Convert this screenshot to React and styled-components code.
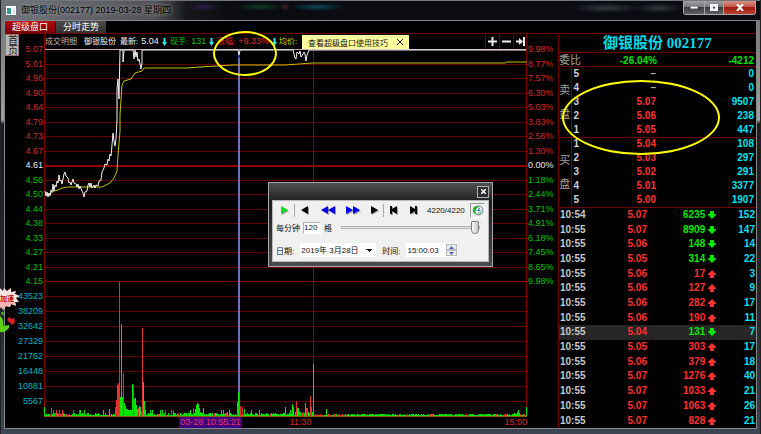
import React, { useState } from 'react';
import styled, { createGlobalStyle } from 'styled-components';

const PRICES = ['5.07', '5.01', '4.96', '4.90', '4.84', '4.79', '4.73', '4.67', '4.61', '4.56', '4.50', '4.44', '4.38', '4.33', '4.27', '4.21', '4.15'];
const PERCENTS = ['9.98%', '8.77%', '7.57%', '6.30%', '5.03%', '3.83%', '2.56%', '1.30%', '0.00%', '1.18%', '2.44%', '3.71%', '4.91%', '6.18%', '7.45%', '8.65%', '9.98%'];
const VOLUMES = ['43523', '38209', '32642', '27329', '21762', '16448', '10881', '5567'];

const SELL = [
  ['5', '–', '0'],
  ['4', '–', '0'],
  ['3', '5.07', '9507'],
  ['2', '5.06', '238'],
  ['1', '5.05', '447'],
];
const BUY = [
  ['1', '5.04', '108'],
  ['2', '5.03', '297'],
  ['3', '5.02', '291'],
  ['4', '5.01', '3377'],
  ['5', '5.00', '1907'],
];

const TRADES = [
  ['10:54', '5.07', 6235, 'down', 152],
  ['10:55', '5.07', 8909, 'down', 147],
  ['10:55', '5.06', 148, 'down', 14],
  ['10:55', '5.05', 314, 'down', 22],
  ['10:55', '5.06', 17, 'up', 3],
  ['10:55', '5.06', 127, 'up', 9],
  ['10:55', '5.06', 282, 'up', 17],
  ['10:55', '5.06', 190, 'up', 11],
  ['10:55', '5.04', 131, 'down', 7],
  ['10:55', '5.05', 303, 'up', 17],
  ['10:55', '5.06', 379, 'up', 18],
  ['10:55', '5.07', 1276, 'up', 40],
  ['10:55', '5.07', 1033, 'up', 21],
  ['10:55', '5.07', 1063, 'up', 26],
  ['10:55', '5.07', 828, 'up', 21],
];

const PRICE_LINE =
  '1,142 2,147 3,143 4,148 5,144 6,147 7,141 8,143 9,135 10,142 11,136 12,138 13,132 14,134 15,126 16,132 17,131 18,135 19,130 20,125 21,123 22,127 24,129 25,134 26,133 27,136 29,130 30,134 32,135 33,138 34,135 35,140 36,137 38,142 39,144 40,148 41,143 43,142 44,136 45,134 46,138 47,134 48,139 50,136 51,139 52,136 54,137 55,132 57,131 58,123 60,119 61,115 63,116 64,110 65,112 66,105 67,107 68,96 69,84 70,92 71,97 72,90 73,71 73,40 74,30 75,50 76,1 79,1 79,13 80,1 89,1 90,10 91,1 92,8 93,3 94,12 95,10 97,20 98,14 98,1 194,1 195,6 196,1 249,1 251,9 252,10 253,3 255,5 256,2 257,8 259,5 260,3 261,5 262,12 263,6 265,1 482,1';
const AVERAGE_LINE =
  '1,145 6,145 10,142 14,141 18,139 24,138 40,138 58,138 62,136 66,134 70,129 73,122 74,106 76,82 76,66 77,51 78,36 80,32 87,30 91,24 98,22 100,19 143,19 156,18 189,16 241,16 255,15 269,14 461,14 463,13 483,13';

// [x, y of the top, colour]
const PEAKS = [
  [0, 358, 'g'], [7, 359, 'r'], [11, 364, 'r'], [18, 361, 'r'],
  [59, 361, 'g'], [65, 360, 'g'],
  [71, 358, 'r'], [72, 351, 'r'], [73, 336, 'r'], [74, 334, 'r'], [75, 233, 'r'],
  [76, 348, 'g'], [77, 275, 'g'], [78, 348, 'g'], [79, 324, 'm'], [80, 354, 'g'], [81, 357, 'g'], [82, 360, 'g'],
  [83, 360, 'g'], [84, 361, 'g'], [86, 361, 'g'], [88, 335, 'g'], [89, 336, 'm'], [90, 350, 'g'], [91, 349, 'g'],
  [92, 356, 'g'], [94, 359, 'r'], [96, 358, 'g'], [98, 279, 'r'], [99, 333, 'g'], [100, 352, 'g'], [101, 361, 'g'],
  [106, 361, 'g'], [129, 362, 'g'], [151, 360, 'g'], [152, 356, 'g'], [153, 354, 'g'], [154, 355, 'g'], [155, 362, 'g'],
  [183, 363, 'g'], [193, 353, 'g'], [194, 342, 'g'], [195, 344, 'g'], [196, 357, 'r'], [198, 358, 'r'], [200, 360, 'g'],
  [241, 358, 'g'], [248, 355, 'g'], [249, 358, 'g'], [252, 352, 'r'], [254, 360, 'g'], [261, 354, 'g'],
  [262, 360, 'r'], [266, 347, 'r'], [267, 358, 'r'], [269, 315, 'g'], [282, 360, 'g'],
  [470, 364, 'g'], [473, 363, 'g'], [474, 361, 'g'], [475, 364, 'g'], [482, 358, 'g'],
];

const FILL = { r: '#e83030', g: '#00e800', m: '#7a6a10' };

const wobble = (i) => {
  const v = Math.sin(i * 12.9898) * 43758.5453;
  return v - Math.floor(v);
};

const BARS = Array.from({ length: 483 }, (_, x) => {
  const n = wobble(x + 1);
  const busy = x < 270 ? 3 : 2;
  let h = 1 + Math.floor(n * busy);
  if (n > 0.9 && x < 270) h += 3;
  if (x > 78 && x < 102) h += 4;
  if (x > 148 && x < 160) h += 2;
  if (x > 250 && x < 270) h += 2;
  const redChance = x < 30 || (x > 250 && x < 300) ? 0.6 : 0.15;
  return { x, h, color: wobble(x + 700) < redChance ? FILL.r : FILL.g };
});

const StockChart = () => (
  <ChartSvg viewBox='0 0 483 368' preserveAspectRatio='none' role='img' aria-label='分时走势'>
    <g shapeRendering='crispEdges'>
      {PRICES.map((p, i) => (
        <rect
          key={p}
          x='0'
          y={Math.round(i * 14.5)}
          width='483'
          height={i === 8 ? 2 : 1}
          fill={i === 0 ? '#c8a8a8' : i === 8 || i === 16 ? '#900000' : '#680000'}
        />
      ))}
      {VOLUMES.map((v, i) => (
        <rect key={v} x='0' y={247 + i * 15} width='483' height='1' fill='#680000' />
      ))}
      <rect x='0' y='0' width='1' height='368' fill='#800000' />
      <rect x='482' y='0' width='1' height='368' fill='#800000' />
      <rect x='269' y='0' width='1' height='368' fill='#980000' />
      {BARS.map((b) => (
        <rect key={b.x} x={b.x} y={367 - b.h} width='1' height={b.h} fill={b.color} />
      ))}
      {PEAKS.map(([x, y, c]) => (
        <rect key={x} x={x} y={y} width='1' height={367 - y} fill={FILL[c]} />
      ))}
      <rect x='0' y='367' width='483' height='1' fill='#8a5a00' />
      <rect x='194' y='5' width='2' height='338' fill='#7070b4' />
      <rect x='195' y='343' width='1' height='25' fill='#7070b4' />
      <rect x='194' y='5' width='2' height='4' fill='#2030a0' />
    </g>
    <polyline points={AVERAGE_LINE} fill='none' stroke='#c8c000' strokeWidth='1' />
    <polyline points={PRICE_LINE} fill='none' stroke='#f0f0f0' strokeWidth='1' />
  </ChartSvg>
);

const BlockArrow = ({ dir }) => (
  <svg width='8' height='8' viewBox='0 0 8 8' aria-hidden='true'>
    <path
      d={dir === 'down' ? 'M2 0h4v3h2v1L4 8 0 4V3h2z' : 'M2 8h4V5h2V4L4 0 0 4v1h2z'}
      fill='currentColor'
    />
  </svg>
);

const ThinArrow = () => (
  <svg width='5' height='8' viewBox='0 0 5 8' aria-hidden='true'>
    <path d='M1.500 0h2v4H5L2.500 8 0 4h1.500z' fill='#30e8f0' />
  </svg>
);

const PlayIcon = ({ kind }) => {
  const shapes = {
    play: ['M2 1l7 4-7 4z', '#00e020', 10],
    prev: ['M8 1v8L1 5z', '#000', 10],
    rewind: ['M8 1v8L1 5zM15 1v8L8 5z', '#0000f0', 16],
    forward: ['M1 1v8l7-4zM8 1v8l7-4z', '#0000f0', 16],
    next: ['M2 1v8l7-4z', '#000', 10],
    first: ['M1 1h2v3l5-3v8L3 6v3H1z', '#000', 10],
    last: ['M9 1H7v3L2 1v8l5-3v3h2z', '#000', 10],
  };
  const [d, fill, w] = shapes[kind];
  return (
    <svg width={w} height='11' viewBox={`0 0 ${w} 11`} aria-hidden='true'>
      <path d={d} fill='#9a9a9a' transform='translate(1 1)' />
      <path d={d} fill={fill} />
    </svg>
  );
};

const BookSide = ({ name, rows }) => (
  <tbody>
    {rows.map(([level, price, volume], i) => (
      <tr key={level}>
        {i === 0 && (
          <SideHead rowSpan={5} scope='rowgroup'>
            {name[0]}
            <br />
            {name[1]}
          </SideHead>
        )}
        <LevelCell>{level}</LevelCell>
        <PriceCell $muted={price === '–'}>{price}</PriceCell>
        <VolumeCell>{volume}</VolumeCell>
      </tr>
    ))}
  </tbody>
);

const ReplayDialog = () => {
  const [speed, setSpeed] = useState('120');
  const [progress, setProgress] = useState(100);
  const [time, setTime] = useState('15:00:03');

  return (
    <Dialog role='dialog' aria-label='回放'>
      <DialogTitle>
        <DialogClose aria-label='关闭'>
          <svg width='5' height='5' viewBox='0 0 5 5'>
            <path d='M0 0l5 5M5 0L0 5' stroke='#fff' strokeWidth='1.500' />
          </svg>
        </DialogClose>
      </DialogTitle>
      <DialogBody>
        <PlayRow>
          <PlayButton $w={20} aria-label='播放'><PlayIcon kind='play' /></PlayButton>
          <Separator />
          <PlayButton $w={20} aria-label='上一笔'><PlayIcon kind='prev' /></PlayButton>
          <PlayButton $w={25} aria-label='快退'><PlayIcon kind='rewind' /></PlayButton>
          <PlayButton $w={25} aria-label='快进'><PlayIcon kind='forward' /></PlayButton>
          <PlayButton $w={18} aria-label='下一笔'><PlayIcon kind='next' /></PlayButton>
          <Separator />
          <PlayButton $w={20} aria-label='最前'><PlayIcon kind='first' /></PlayButton>
          <PlayButton $w={18} aria-label='最后'><PlayIcon kind='last' /></PlayButton>
          <Counter>4220/4220</Counter>
          <ClockButton aria-label='时间'>
            <svg width='12' height='11' viewBox='0 0 12 11'>
              <circle cx='6.500' cy='5.500' r='4.500' fill='#e4f0fa' stroke='#6a8098' />
              <path d='M5.500 5.500L8 3M5.500 5.500h3' stroke='#3070b0' fill='none' />
              <path d='M7 1.500C3 0 0 3 1 7l3 3-.5-4C4 4 5 3 7 1.500z' fill='#28b428' />
              <path d='M5 9.500l2-2 1 1 2-2' stroke='#28b428' fill='none' />
            </svg>
          </ClockButton>
        </PlayRow>
        <SpeedRow>
          <label htmlFor='speed'>每分钟</label>
          <SpeedInput id='speed' value={speed} onChange={(e) => setSpeed(e.target.value)} />
          <span>格</span>
          <Slider
            type='range'
            aria-label='进度'
            value={progress}
            onChange={(e) => setProgress(Number(e.target.value))}
          />
        </SpeedRow>
        <DateRow>
          <label htmlFor='date'>日期:</label>
          <DateSelect id='date'>
            <option>2019年 3月28日</option>
          </DateSelect>
          <label htmlFor='time'>时间:</label>
          <TimeBox>
            <TimeInput id='time' value={time} onChange={(e) => setTime(e.target.value)} />
            <Spinner>
              <SpinButton aria-label='增加'>
                <svg width='5' height='3' viewBox='0 0 5 3'><path d='M0 3l2.500-3L5 3z' fill='#4868b8' /></svg>
              </SpinButton>
              <SpinButton aria-label='减少'>
                <svg width='5' height='3' viewBox='0 0 5 3'><path d='M0 0l2.500 3L5 0z' fill='#4868b8' /></svg>
              </SpinButton>
            </Spinner>
          </TimeBox>
        </DateRow>
      </DialogBody>
    </Dialog>
  );
};

const App = () => {
  const [tipOpen, setTipOpen] = useState(true);

  return (
    <>
      <GlobalStyle />
      <Window>
        <TitleBar>
          <AppIcon width='10' height='9' viewBox='0 0 10 9' aria-hidden='true'>
            <rect width='10' height='9' fill='#f4f8f8' />
            <rect x='1' y='2' width='4' height='6' fill='#3a9a98' />
            <rect x='7' y='3' width='2' height='5' fill='#d8dce0' />
          </AppIcon>
          <Title>御银股份(002177) 2019-03-28 星期四</Title>
          <WindowButtons>
            <WindowButton $w={20} aria-label='最小化'>
              <svg width='8' height='3'><rect width='8' height='3' fill='#fff' stroke='#555' /></svg>
            </WindowButton>
            <WindowButton $w={19} aria-label='最大化'>
              <svg width='8' height='7' viewBox='0 0 8 7'>
                <path d='M0 0h8v7H0zM3 2.500v2h2v-2z' fill='#f4f4f4' fillRule='evenodd' />
              </svg>
            </WindowButton>
            <WindowButton $w={32} $close aria-label='关闭'>
              <svg width='8' height='7' viewBox='0 0 8 7'>
                <path d='M1 0l6 7M7 0L1 7' stroke='#fff' strokeWidth='2' />
              </svg>
            </WindowButton>
          </WindowButtons>
        </TitleBar>

        <Content>
          <Tabs>
            <Tab $active>超级盘口</Tab>
            <Tab>分时走势</Tab>
          </Tabs>
          <Main>
            <div>
              <HomeButton>首页</HomeButton>
            </div>
            <Axis $align='right'>
              <PriceScale>
                {PRICES.map((p, i) => <Tick key={p} $row={i}>{p}</Tick>)}
              </PriceScale>
              {VOLUMES.map((v) => <VolumeTick key={v}>{v}</VolumeTick>)}
            </Axis>

            <ChartArea>
              <ChartHeader>
                <Field $w={39}>成交明细</Field>
                <Field $w={36} $color='#f0f0f0'>御银股份</Field>
                <Field $w={50} $color='#f0f0f0'>最新:<b>5.04</b><ThinArrow /></Field>
                <Field $w={47} $color='#00c800'>现手:<b>131</b><ThinArrow /></Field>
                <Field $w={62} $color='#e02828'>涨幅:<b>+9.33%</b><ThinArrow /></Field>
                <Field $w={22} $color='#d8d000'>均价:</Field>
                <ToolButtons>
                  <ToolButton aria-label='放大'>
                    <svg width='9' height='9' viewBox='0 0 9 9'><path d='M3.500 0h2v3.500H9v2H5.500V9h-2V5.500H0v-2h3.500z' fill='#eee' /></svg>
                  </ToolButton>
                  <ToolButton aria-label='缩小'>
                    <svg width='9' height='9' viewBox='0 0 9 9'><path d='M0 3.500h9v2H0z' fill='#eee' /></svg>
                  </ToolButton>
                  <ToolButton aria-label='移到末尾'>
                    <svg width='9' height='9' viewBox='0 0 9 9'><path d='M0 3.500h3V1l4 3.500L3 8V5.500H0zM7 0h2v9H7z' fill='#eee' /></svg>
                  </ToolButton>
                </ToolButtons>
                {tipOpen && (
                  <Tip>
                    <a href='#tips'>查看超级盘口使用技巧</a>
                    <TipClose aria-label='关闭提示' onClick={() => setTipOpen(false)}>
                      <svg width='6' height='6' viewBox='0 0 6 6'><path d='M0 0l6 6M6 0L0 6' stroke='#222' /></svg>
                    </TipClose>
                  </Tip>
                )}
              </ChartHeader>
              <StockChart />
              <TimeAxis>
                <CursorTime>03-28 10:55:21</CursorTime>
                <NoonTime>11:30</NoonTime>
                <span>15:00</span>
              </TimeAxis>
              <ChartMark />
            </ChartArea>

            <Axis>
              <PriceScale>
                {PERCENTS.map((p, i) => <Tick key={i} $row={i}>{p}</Tick>)}
              </PriceScale>
            </Axis>

            <Quotes>
              <QuoteTitle>御银股份 002177</QuoteTitle>
              <Ratio>
                <RatioName>委比</RatioName>
                <span>-26.04%</span>
                <span>-4212</span>
              </Ratio>
              <BookTable>
                <BookSide name='卖盘' rows={SELL} />
                <BookSide name='买盘' rows={BUY} />
              </BookTable>
              <TradeTable>
                <tbody>
                  {TRADES.map(([at, price, volume, dir, count], i) => (
                    <TradeRow key={i} $selected={i === 8}>
                      <TimeCell>{at}</TimeCell>
                      <TradePrice>{price}</TradePrice>
                      <TradeVolume $dir={dir}>{volume} <BlockArrow dir={dir} /></TradeVolume>
                      <CountCell>{count}</CountCell>
                    </TradeRow>
                  ))}
                </tbody>
              </TradeTable>
              <BookMark />
            </Quotes>

            <ReplayDialog />
          </Main>
        </Content>

        <Sticker href='#boost'>
          <svg width='20' height='50' viewBox='0 0 20 50' aria-hidden='true'>
            <path d='M0 1l3 3 1-3 3 3 4-3v4l5-1-1 3 5 2-4 2 3 4-4 0 1 4-5-2-1 3-4-1-3 4-1-3-2 1z' fill='#fce4e4' />
            <path d='M0 15h15l1 3-5-1-1 3-4-1-3 4-1-3-2 1z' fill='#f4b4b4' />
            <path d='M9 30l3 2 2-1 1 4-3 3-5-5z' fill='#e02020' />
            <path d='M1 25h3v3H1z' fill='#30a010' />
            <path d='M0 29q4 3 3 10l6-1v3q-4 5-9 4z' fill='#60d018' />
          </svg>
          <StickerText>加速</StickerText>
        </Sticker>
      </Window>
    </>
  );
};

export default App;

const GlobalStyle = createGlobalStyle`
  * {
    box-sizing: border-box;
  }

  body {
    margin: 0;
    background: #000;
    font-family: 'Liberation Sans', 'Noto Sans CJK SC', sans-serif;
    font-size: 9px;
    color: #ddd;
  }

  button,
  input,
  select {
    margin: 0;
    padding: 0;
    border: none;
    border-radius: 0;
    font: inherit;
    color: inherit;
  }

  button {
    display: flex;
    align-items: center;
    justify-content: center;
    background: none;
  }

  svg {
    display: block;
    flex: none;
  }
`;

const Window = styled.div`
  position: relative;
  display: flex;
  flex-direction: column;
  min-height: 100vh;
  padding: 0 3px 5px;
  background: linear-gradient(to bottom, #6e6e72, #a0a0a2 120px, #1c1c20 124px, #26262c 70%, #3c4654);
  border-left: 1px solid #222;
  border-right: 1px solid #222;
`;

const TitleBar = styled.header`
  display: flex;
  align-items: flex-start;
  height: 20px;
  margin: 0 -3px;
  padding: 0 4px 0 5px;
  border-top: 1px solid #70747c;
  background:
    radial-gradient(ellipse 16px 4px at 203px 6px, #2c1c4c, transparent),
    radial-gradient(ellipse 24px 4px at 259px 6px, #0c3c24, transparent),
    radial-gradient(ellipse 28px 4px at 316px 6px, #0c4454, transparent),
    radial-gradient(ellipse 5px 4px at 284px 6px, #4c1820, transparent),
    radial-gradient(ellipse 36px 5px at 606px 7px, #32363e, transparent),
    radial-gradient(ellipse 24px 5px at 658px 7px, #32363e, transparent),
    linear-gradient(to right, #70747a, #606266 90px, #505256 155px, #18181c 185px, #0a0c10 230px, #0a0c12);
`;

const AppIcon = styled.svg`
  margin-top: 5px;
`;

const Title = styled.h1`
  margin: 1px 0 0 5px;
  font-size: 9px;
  font-weight: normal;
  line-height: 16px;
  color: #000;
  text-shadow: 0 0 4px #bbb;
`;

const WindowButtons = styled.div`
  display: flex;
  margin-left: auto;
  border: 1px solid #a8a8ac;
  border-top: none;
  border-radius: 0 0 3px 3px;
  overflow: hidden;
`;

const WindowButton = styled.button`
  width: ${({ $w }) => $w}px;
  height: 13px;
  background: ${({ $close }) =>
    $close
      ? 'linear-gradient(#d89084, #c05848 45%, #a01c10 50%, #b84030)'
      : 'linear-gradient(#a0a0a4, #78787c 45%, #3c3c40 50%, #606064)'};

  & + & {
    border-left: 1px solid #a8a8ac;
  }
`;

const Content = styled.div`
  flex: 1;
  display: flex;
  flex-direction: column;
  border: 1px solid #84888c;
  background: #000;
`;

const Tabs = styled.nav`
  display: flex;
  gap: 1px;
  height: 13px;
  border-bottom: 1px solid #700000;
`;

const Tab = styled.button`
  width: 50px;
  height: 12px;
  line-height: 12px;
  color: #fff;
  background: ${({ $active }) => ($active ? 'linear-gradient(#b80c10, #780004)' : 'linear-gradient(#4c4c4c, #303030)')};
`;

const Main = styled.main`
  position: relative;
  flex: 1;
  display: grid;
  grid-template-columns: 14px 25px minmax(0, 1fr) 31px 198px;
`;

const HomeButton = styled.button`
  width: 14px;
  height: 22px;
  align-items: center;
  justify-content: flex-end;
  overflow: hidden;
  writing-mode: vertical-rl;
  font-size: 10px;
  color: #222;
  background: #b8b8b8;
  border: 1px solid #a07070;
`;

const Axis = styled.div`
  padding: 8px 1px 0;
  text-align: ${({ $align }) => $align || 'left'};
  white-space: nowrap;
  direction: ${({ $align }) => ($align ? 'rtl' : 'ltr')};
`;

const PriceScale = styled.div`
  display: flex;
  flex-direction: column;
  justify-content: space-between;
  height: 246px;
  margin-bottom: 1px;
`;

const Tick = styled.span`
  line-height: 14px;
  color: ${({ $row }) => ($row < 8 ? '#d82828' : $row === 8 ? '#e8e8e8' : '#00c000')};
`;

const VolumeTick = styled.div`
  line-height: 15px;
  color: #00b0c0;
`;

const ChartArea = styled.section`
  position: relative;
  min-width: 0;
`;

const ChartHeader = styled.div`
  position: relative;
  display: flex;
  align-items: center;
  height: 15px;
  border-left: 1px solid #800000;
`;

const Field = styled.span`
  display: flex;
  flex: none;
  align-items: center;
  gap: 3px;
  width: ${({ $w }) => $w}px;
  font-size: 8px;
  line-height: 15px;
  white-space: nowrap;
  color: ${({ $color }) => $color || '#b8b8b8'};

  b {
    font-size: 9px;
    font-weight: normal;
  }
`;

const ToolButtons = styled.div`
  display: flex;
  margin-left: auto;
`;

const ToolButton = styled.button`
  width: 14px;
  height: 15px;
  border-left: 1px solid #700000;

  &:last-child {
    border-right: 1px solid #700000;
  }
`;

const Tip = styled.div`
  position: absolute;
  left: 257px;
  top: 1px;
  display: flex;
  align-items: center;
  gap: 8px;
  height: 14px;
  padding: 0 5px 0 6px;
  font-size: 8px;
  background: #ffffa0;

  a {
    color: #111;
    text-decoration: none;
    white-space: nowrap;
  }
`;

const TipClose = styled.button`
  width: 8px;
  height: 10px;
`;

const ChartSvg = styled.svg`
  width: 100%;
  height: 368px;
`;

const TimeAxis = styled.div`
  display: flex;
  justify-content: flex-end;
  line-height: 11px;
  color: #d82828;
`;

const CursorTime = styled.span`
  margin-right: auto;
  margin-left: 28%;
  padding: 0 1px;
  white-space: nowrap;
  color: #f03060;
  background: #3c0080;
`;

const NoonTime = styled.span`
  margin-right: 40%;
`;

const ChartMark = styled.div`
  position: absolute;
  left: 169px;
  top: -3px;
  width: 64px;
  height: 45px;
  border: 2px solid #ffff00;
  border-radius: 50%;
  pointer-events: none;
`;

const Quotes = styled.section`
  position: relative;
  display: flex;
  flex-direction: column;
  border-left: 1px solid #700000;
  font-size: 10px;
  font-weight: bold;
`;

const QuoteTitle = styled.h2`
  margin: 0;
  font-family: 'Liberation Serif', 'Noto Sans CJK SC', serif;
  font-size: 15px;
  line-height: 18px;
  text-align: center;
  color: #00d8e8;
`;

const Ratio = styled.div`
  display: grid;
  grid-template-columns: 24px 74px 1fr;
  height: 15px;
  padding-right: 2px;
  line-height: 15px;
  text-align: right;
  color: #00e000;
  border-top: 1px solid #700000;
  border-bottom: 1px solid #700000;
`;

const RatioName = styled.span`
  font-size: 11px;
  font-weight: normal;
  line-height: 14px;
  text-align: left;
  color: #a0a0a0;
`;

const BookTable = styled.table`
  width: 100%;
  border-collapse: collapse;
  table-layout: fixed;

  td,
  th {
    height: 14px;
    padding: 0;
    line-height: 12px;
  }

  tbody {
    border-bottom: 1px solid #700000;
  }
`;

const SideHead = styled.th`
  && {
    width: 12px;
    font-size: 11px;
    font-weight: normal;
    line-height: 24px;
    color: #a0a0a0;
    border-right: 1px solid #700000;
  }
`;

const LevelCell = styled.td`
  && {
    width: 12px;
    padding-left: 2px;
    color: #d0d0d0;
  }
`;

const PriceCell = styled.td`
  width: 73px;
  text-align: right;
  color: ${({ $muted }) => ($muted ? '#b0b0b0' : '#ff3030')};
`;

const VolumeCell = styled.td`
  && {
    padding-right: 2px;
    text-align: right;
    color: #00e0f0;
  }
`;

const TradeTable = styled.table`
  flex: 1;
  width: 100%;
  border-collapse: collapse;
  table-layout: fixed;

  td {
    padding: 0;
    line-height: 12px;
    text-align: right;
  }
`;

const TradeRow = styled.tr`
  background: ${({ $selected }) => ($selected ? '#262626' : 'transparent')};
`;

const TimeCell = styled.td`
  && {
    width: 30px;
    padding-left: 1px;
    text-align: left;
    color: #c8c8c8;
  }
`;

const TradePrice = styled.td`
  width: 58px;
  color: #ff3030;
`;

const TradeVolume = styled.td`
  width: 69px;
  color: ${({ $dir }) => ($dir === 'down' ? '#00e800' : '#ff3030')};

  svg {
    display: inline-block;
    vertical-align: -1px;
  }
`;

const CountCell = styled.td`
  && {
    padding-right: 1px;
    color: #00e0f0;
  }
`;

const BookMark = styled.div`
  position: absolute;
  left: 3px;
  top: 46px;
  width: 158px;
  height: 75px;
  border: 2px solid #ffff00;
  border-radius: 50%;
  pointer-events: none;
`;

const Dialog = styled.div`
  position: absolute;
  left: 263px;
  top: 148px;
  width: 225px;
  padding: 0 3px 4px;
  border: 1px solid #a8a8a8;
  font-size: 8px;
  color: #111;
  background: linear-gradient(#505054, #1c1c1e 20px, #4c4c50);
`;

const DialogTitle = styled.div`
  display: flex;
  align-items: center;
  justify-content: flex-end;
  height: 17px;
`;

const DialogClose = styled.button`
  width: 12px;
  height: 12px;
  border: 1px solid #b0b0b0;
  background: #303034;
`;

const DialogBody = styled.div`
  display: flex;
  flex-direction: column;
  padding: 1px 1px 4px;
  border: 1px solid #b8b8b8;
  background: #f0f0f0;
`;

const PlayRow = styled.div`
  display: flex;
  align-items: center;
  height: 17px;
`;

const PlayButton = styled.button`
  width: ${({ $w }) => $w}px;
  height: 16px;
`;

const Separator = styled.span`
  width: 1px;
  height: 13px;
  background: #a8a8a8;
`;

const Counter = styled.span`
  margin-left: 5px;
`;

const ClockButton = styled.button`
  width: 15px;
  height: 15px;
  margin-left: auto;
  margin-right: 2px;
  border: 1px solid #989898;
  border-right-color: #fff;
  border-bottom-color: #fff;
`;

const SpeedRow = styled.div`
  display: flex;
  align-items: center;
  gap: 3px;
  height: 17px;
  padding: 0 7px 0 2px;
`;

const SpeedInput = styled.input`
  width: 18px;
  height: 12px;
  border: 1px solid #b0b0b0;
  border-right-color: #fff;
  border-bottom-color: #fff;
  background: #fff;
`;

const Slider = styled.input`
  flex: 1;
  min-width: 0;
  height: 13px;
  margin-left: 6px;
  appearance: none;
  background: transparent;

  &::-webkit-slider-runnable-track {
    height: 3px;
    border: 1px solid #b4b4b4;
    background: #e4e4e4;
  }

  &::-webkit-slider-thumb {
    appearance: none;
    width: 8px;
    height: 13px;
    margin-top: -6px;
    border: 1px solid #808080;
    border-radius: 1px 1px 4px 4px;
    background: linear-gradient(to right, #fafafa, #c8c8c8);
  }
`;

const DateRow = styled.div`
  display: flex;
  align-items: center;
  gap: 6px;
  height: 14px;
  margin-top: 7px;
  padding-left: 2px;
`;

const DateSelect = styled.select`
  width: 76px;
  height: 14px;
  padding-left: 1px;
  appearance: none;
  background:
    linear-gradient(to top right, transparent 50%, #111 50%) 66px 6px / 3px 3px no-repeat,
    linear-gradient(to top left, transparent 50%, #111 50%) 69px 6px / 3px 3px no-repeat,
    #fff;
`;

const TimeBox = styled.div`
  display: flex;
  align-items: center;
  width: 51px;
  height: 14px;
  background: #fff;
`;

const TimeInput = styled.input`
  flex: 1;
  min-width: 0;
  padding-left: 1px;
  background: none;
`;

const Spinner = styled.div`
  display: flex;
  flex-direction: column;
`;

const SpinButton = styled.button`
  width: 11px;
  height: 6px;
  border: 1px solid #b8b8c0;
  background: #ececf0;
`;

const Sticker = styled.a`
  position: absolute;
  left: -1px;
  top: 287px;
  text-decoration: none;
`;

const StickerText = styled.span`
  position: absolute;
  left: 0;
  top: 7px;
  font-size: 7px;
  font-weight: bold;
  line-height: 9px;
  white-space: nowrap;
  color: #c80000;
`;
